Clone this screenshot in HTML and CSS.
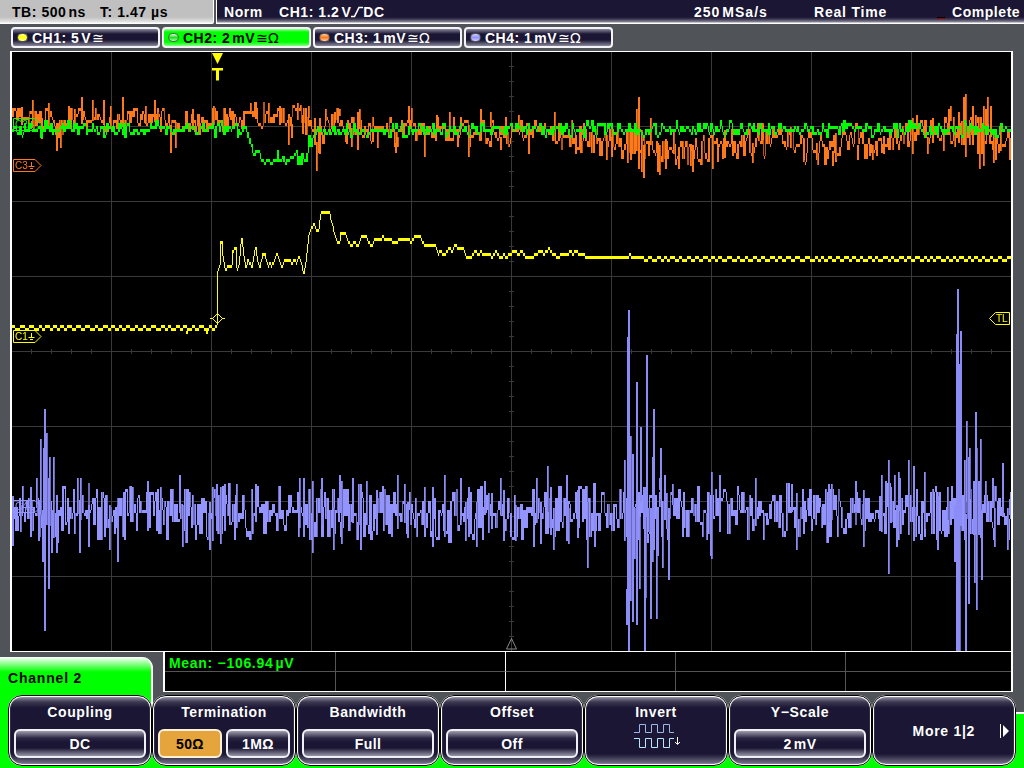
FILE: index.html
```html
<!DOCTYPE html>
<html lang="en">
<head>
  <meta charset="UTF-8">
  <meta name="viewport" content="width=device-width, initial-scale=1.0">
  <title>Oscilloscope</title>
  <link rel="stylesheet" href="styles.css">
</head>
<body>
  <div class="scope">
    <header class="status">
      <div class="timebase">
        <span class="tb">TB: 500<i></i>ns</span>
        <span class="tpos">T: 1.47 µs</span>
      </div>
      <div class="trigger">
        <span class="mode">Norm</span>
        <span class="source">CH1: 1.2<i></i>V<svg class="edge" width="12" height="12" viewBox="0 0 12 12"><path d="M0 10.500h3.500L8 1.500h4" /></svg>DC</span>
        <span class="rate">250<i></i>MSa/s</span>
        <span class="acq">Real Time</span>
        <span class="led"></span>
        <span class="state">Complete</span>
      </div>
    </header>

    <nav class="channels">
      <div class="channel"><span class="dot yellow"></span>CH1: 5<i></i>V<span class="sym">≅</span></div>
      <div class="channel active"><span class="dot green"></span>CH2: 2<i></i>mV<span class="sym">≅Ω</span></div>
      <div class="channel"><span class="dot orange"></span>CH3: 1<i></i>mV<span class="sym">≅Ω</span></div>
      <div class="channel"><span class="dot violet"></span>CH4: 1<i></i>mV<span class="sym">≅Ω</span></div>
    </nav>

    <main class="plot">
      <canvas id="traces" width="999" height="599"></canvas>
      <svg class="markers" width="999" height="599" viewBox="12 52 999 599">
        <g class="m-yellow">
          <path class="solid" d="M212 53h11l-5.500 11zM212 68h11v2.500h-4v10h-3v-10h-4z" />
          <path d="M210 318.500h3M222 318.500h3M212.500 318.500l5-5 5 5-5 5z" />
          <path d="M13.500 330.500h21.500l6 6-6 6H13.500z" />
          <path d="M31.500 333v4M28.500 337.500h6M30 339.500h3" />
          <text x="15" y="340">C1</text>
          <path d="M1009.500 312.500h-14l-6 6 6 6h14z" />
          <text x="996" y="322">TL</text>
        </g>
        <g class="m-green">
          <path d="M13.500 118.500h21.500l6 6-6 6H13.500z" />
          <path d="M31.500 121v4M28.500 125.500h6M30 127.500h3" />
          <text x="15" y="128">C2</text>
        </g>
        <g class="m-orange">
          <path d="M13.500 159.500h21.500l6 6-6 6H13.500z" />
          <path d="M31.500 162v4M28.500 166.500h6M30 168.500h3" />
          <text x="15" y="169">C3</text>
        </g>
        <g class="m-violet">
          <path d="M13.500 500.500h21.500l6 6-6 6H13.500z" />
          <path d="M31.500 503v4M28.500 507.500h6M30 509.500h3" />
          <text x="15" y="510">C4</text>
        </g>
        <path class="m-gray" d="M511.500 638.500l5 10.500h-10z" />
      </svg>
    </main>

    <section class="panel">
      <div class="info">
        <div class="tab">Channel 2</div>
        <div class="measure">
          <div class="value">Mean: −106.94<i></i>µV</div><div></div><div class="half"></div><div></div><div></div>
          <div></div><div></div><div class="half"></div><div></div><div></div>
        </div>
      </div>
      <div class="softkeys">
        <div class="key"><h2>Coupling</h2><div class="options"><button>DC</button></div></div>
        <div class="key"><h2>Termination</h2><div class="options"><button class="on">50Ω</button><button>1MΩ</button></div></div>
        <div class="key"><h2>Bandwidth</h2><div class="options"><button>Full</button></div></div>
        <div class="key"><h2>Offset</h2><div class="options"><button>Off</button></div></div>
        <div class="key">
          <h2>Invert</h2>
          <svg class="invert" width="48" height="26" viewBox="0 0 48 26">
            <path class="w1" d="M0 9.500h5.500v-8h6v8h6v-8h6v8h6v-8h6v8h4.500" />
            <path class="w2" d="M0 15.500h5.500v9h6v-9h6v9h6v-9h6v9h6v-9h4.500" />
            <path class="arrow" d="M43.500 14v7M41 19l2.500 2.500L46 19" />
          </svg>
        </div>
        <div class="key"><h2>Y−Scale</h2><div class="options"><button>2<i></i>mV</button></div></div>
        <div class="key more">
          <span>More 1|2</span>
          <svg width="9" height="14" viewBox="0 0 9 14"><path d="M0 0h1v14H0zM3 1l6 6-6 6z" /></svg>
        </div>
      </div>
    </section>
  </div>
  <script src="script.js"></script>
</body>
</html>
```
FILE: styles.css
```css
* {
  box-sizing: border-box;
}

body {
  margin: 0;
  background: #505458;
  font-family: "Liberation Sans", Arial, sans-serif;
  font-weight: bold;
  font-size: 14px;
  color: #fff;
}

.scope {
  width: 1024px;
  height: 768px;
  overflow: hidden;
  display: flex;
  flex-direction: column;
}

/* thin gap between a number and its unit */
i {
  display: inline-block;
  width: 2px;
}

.status {
  display: flex;
  gap: 2px;
  height: 24px;
  line-height: 24px;
  white-space: nowrap;
  letter-spacing: 0.55px;
}

.status span {
  flex: none;
}

.timebase {
  width: 214px;
  display: flex;
  padding-left: 12px;
  color: #000;
  background: linear-gradient(#c0c0c0 17px, #e4e4e4 22px, #fff 23px);
  border-right: 1px solid #fff;
  border-bottom-right-radius: 2px;
}

.tb {
  width: 88px;
}

.trigger {
  flex: 1;
  display: flex;
  padding-left: 7px;
  background: linear-gradient(#1a1633 17px, #38344e 19px, #8a889a 22px, #fff 23px);
  border-left: 1px solid #fff;
}

.mode {
  width: 55px;
}

.source {
  width: 415px;
}

.edge {
  vertical-align: -1px;
  fill: none;
  stroke: #fff;
  stroke-width: 1.6;
}

.rate {
  width: 120px;
  letter-spacing: 1px;
}

.acq {
  width: 123px;
  letter-spacing: 0.8px;
}

.led {
  width: 8px;
  height: 2px;
  margin: 17px 7px 0 0;
  background: #a00000;
  border-top: 1px solid #000;
}

.channels {
  display: flex;
  gap: 2px;
  height: 27px;
  padding: 3px 0 0 11px;
}

.channel {
  width: 149px;
  height: 21px;
  display: flex;
  align-items: center;
  padding-left: 4px;
  white-space: nowrap;
  letter-spacing: 0.5px;
  border: 2px solid #f4f4f8;
  border-radius: 4px;
  background: linear-gradient(#8a889c, #1a1633 5px, #1a1633 11px, #8a889c);
}

.channel.active {
  color: #000;
  background: linear-gradient(#a0ffa0, #00ff00 3px, #00ff00 13px, #80ff80);
}

.dot {
  width: 11px;
  height: 9px;
  margin-right: 4px;
  border: 1px solid #555;
  border-radius: 5px;
}

.dot.yellow {
  background: linear-gradient(#ff8, #ff0, #ffa);
}

.dot.green {
  background: linear-gradient(#dfd, #2d2, #afa);
  border-color: #464;
}

.dot.orange {
  background: linear-gradient(#fc9, #ff781a, #fca);
}

.dot.violet {
  background: linear-gradient(#ccf, #9494ff, #ccf);
}

.sym {
  margin-left: 1px;
  font-family: "DejaVu Sans", sans-serif;
  font-weight: normal;
  font-size: 14px;
  letter-spacing: 0;
}

.plot {
  flex: none;
  width: 1003px;
  height: 601px;
  margin-left: 10px;
  border: solid #fff;
  border-width: 1px 2px 1px 2px;
  background: #000;
  display: grid;
}

.plot canvas,
.markers {
  grid-area: 1 / 1;
}

.markers {
  fill: none;
}

.markers text {
  font-size: 10px;
  font-weight: normal;
  stroke: none;
}

.m-yellow {
  stroke: #ff0;
}

.m-yellow text,
.m-yellow .solid {
  fill: #ff0;
  stroke: none;
}

.m-green {
  stroke: #0f0;
}

.m-green text {
  fill: #0f0;
}

.m-orange {
  stroke: #ff781a;
}

.m-orange text {
  fill: #ff781a;
}

.m-violet {
  stroke: #9494ff;
}

.m-violet text {
  fill: #9494ff;
}

.m-gray {
  stroke: #8a8a8a;
}

.panel {
  flex: 1;
  display: flex;
  flex-direction: column;
}

.info {
  height: 43px;
  display: flex;
  gap: 10px;
}

.tab {
  width: 153px;
  height: 38px;
  align-self: flex-end;
  padding: 13px 0 0 8px;
  color: #000;
  letter-spacing: 0.8px;
  line-height: 16px;
  border-right: 2px solid #fff;
  border-top-right-radius: 11px;
  background: linear-gradient(#fff, #0f0 15px);
}

.measure {
  width: 850px;
  height: 40px;
  display: grid;
  grid-template-columns: 171px 170px 170px 170px 165px;
  grid-template-rows: 20px 19px;
  border: solid #fff;
  border-width: 0 2px 1px 2px;
  background: #000;
}

.measure div {
  border-right: 1px solid #555;
  border-bottom: 1px solid #555;
}

.measure div:nth-child(5n) {
  border-right: 0;
}

.measure div:nth-child(n + 6) {
  border-bottom: 0;
}

.measure div:nth-child(5n + 2) {
  border-right-color: #fff;
}

.measure .value {
  padding-left: 4px;
  line-height: 22px;
  letter-spacing: 0.7px;
  color: #0f0;
  white-space: nowrap;
}

.softkeys {
  flex: 1;
  display: flex;
  padding-left: 8px;
  background:
    linear-gradient(#fff, #fff) 151px 0 / 2px 14px no-repeat,
    linear-gradient(#0f0, #0f0) 0 0 / 151px 100% no-repeat,
    linear-gradient(#0f0, #0f0) 0 100% / 100% 13px no-repeat,
    linear-gradient(transparent 17px, #fff 17px, #fff 19px, #0f0 19px) 100% 0 / 10px 100% no-repeat;
}

.key {
  width: 144px;
  height: 71px;
  padding: 7px 4px 0;
  border: 2px solid #fff;
  border-radius: 14px;
  box-shadow: inset 0 0 1px #fff;
  outline: 1px solid #000;
  outline-offset: -1px;
  background: linear-gradient(#8f8da0, #3c3852 5px, #1a1633 11px, #1a1633 57px, #77758a);
  text-align: center;
}

.key h2 {
  margin: 0;
  font-size: 14px;
  line-height: 16px;
  letter-spacing: 0.6px;
}

.options {
  display: flex;
  gap: 4px;
  margin-top: 9px;
}

.options button {
  flex: 1;
  height: 29px;
  padding: 0;
  color: #fff;
  font: inherit;
  letter-spacing: 0.4px;
  border: 2px solid #f0f0f4;
  border-radius: 6px;
  background: linear-gradient(#a09eae, #2c2844 7px, #1a1633 11px, #1a1633 17px, #9896a8);
}

.options button.on {
  color: #000;
  border-color: #fff0d8;
  background: #e6a43c;
}

.invert {
  display: block;
  margin: 3px 0 0 44px;
  fill: none;
}

.w1 {
  stroke: #9cb8e8;
}

.w2 {
  stroke: #b8e8ff;
}

.arrow {
  stroke: #fff;
}

.more {
  display: flex;
  align-items: center;
  justify-content: flex-end;
  gap: 25px;
  padding: 0 5px 0 0;
  letter-spacing: 0.7px;
}

.more svg {
  fill: #fff;
}
```
FILE: script.js
```js
const canvas = document.getElementById('traces');
const ctx = canvas.getContext('2d');
ctx.translate(-12, -52); // draw in screen coordinates

let seed = 7;
function rnd() {
  seed = (seed * 16807) % 2147483647;
  return seed / 2147483647;
}

function rect(color, x, y, w, h) {
  ctx.fillStyle = color;
  ctx.fillRect(x, y, w, h);
}

function drawGrid() {
  const c = '#393939';
  for (let x = 111; x < 1011; x += 100) rect(c, x, 52, 1, 599);
  for (let y = 126; y < 651; y += 75) rect(c, 12, y, 999, 1);
  for (let x = 31; x < 1011; x += 20) rect(c, x, 349, 1, 5);
  for (let y = 66; y < 651; y += 15) rect(c, 509, y, 5, 1);
}

// value at x on a list of [x, y] points
function lerp(points, x) {
  for (let i = 1; i < points.length; i++) {
    const [x0, y0] = points[i - 1];
    const [x1, y1] = points[i];
    if (x <= x1) return y0 + (y1 - y0) * (x - x0) / (x1 - x0);
  }
  return points[points.length - 1][1];
}

// noise around mid(x) with amplitude amp(x), y snapped to the 3px sample grid;
// swing is the chance that a sample lands on the other side of the middle
function drawNoise(color, dark, mid, amp, swing) {
  let prev = Math.round(mid(12));
  let side = 1;
  let x = 12;
  while (x < 1011) {
    const step = rnd() < 0.4 ? 2 : 1;
    if (rnd() < swing) side = -side;
    const r = side * Math.pow(rnd(), 1.4);
    const y = Math.round((mid(x) + r * amp(x)) / 3) * 3;
    const top = Math.min(prev, y);
    const h = Math.max(3, Math.abs(prev - y));
    rect(color, x, top, step, h);
    if (rnd() < 0.3 && h > 9) rect(dark, x + step - 1, top, 1, h);
    prev = y;
    x += step;
  }
}

// [x, top, bottom] bars
function drawSpikes(color, dark, list) {
  list.forEach(([x, top, bottom], i) => {
    rect(color, x, top, 2, bottom - top);
    if (i % 2) rect(dark, x + 1, top, 1, bottom - top);
  });
}

const violetSpikes = [
  [12, 496, 546], [20, 505, 532], [30, 487, 516], [36, 478, 508], [38, 500, 541], [40, 439, 515],
  [42, 510, 562], [43, 448, 520], [44, 409, 631], [46, 433, 525], [48, 478, 589], [49, 457, 526],
  [51, 510, 553], [53, 457, 538], [56, 495, 553], [77, 478, 514], [79, 500, 553], [80, 478, 520],
  [88, 505, 547], [109, 505, 550], [117, 505, 562], [132, 487, 514], [147, 481, 531], [160, 487, 534],
  [179, 475, 513], [182, 505, 547], [209, 502, 550], [212, 487, 541], [216, 484, 531], [220, 487, 544],
  [224, 484, 531], [236, 484, 528], [255, 484, 522], [299, 478, 528], [303, 478, 537], [312, 481, 553],
  [321, 478, 525], [333, 508, 550], [339, 475, 513], [341, 481, 544], [352, 478, 523], [358, 484, 525],
  [360, 484, 550], [366, 481, 517], [376, 490, 535], [397, 475, 529], [391, 510, 537], [404, 484, 523],
  [407, 502, 538], [424, 487, 528], [432, 487, 547], [444, 475, 537], [460, 478, 520], [465, 502, 541],
  [468, 487, 537], [476, 502, 547], [484, 481, 515], [488, 493, 533], [491, 493, 529], [500, 478, 515],
  [503, 490, 541], [515, 505, 541], [533, 502, 547], [536, 478, 523], [540, 502, 544], [547, 466, 512],
  [550, 487, 535], [553, 508, 550], [566, 475, 541], [568, 508, 544], [577, 490, 538], [587, 502, 568],
  [594, 502, 547],
  [624, 460, 541], [626, 589, 625], [627, 337, 589], [628, 310, 651], [630, 436, 601], [632, 454, 622],
  [634, 508, 559], [636, 382, 625], [639, 517, 589], [640, 427, 502], [643, 487, 529], [644, 487, 651],
  [645, 510, 598], [646, 355, 517], [648, 508, 532], [650, 508, 619], [652, 457, 562], [653, 409, 550],
  [656, 511, 619], [657, 508, 556], [659, 478, 490], [660, 448, 499], [662, 535, 568], [664, 475, 520],
  [666, 493, 529], [668, 508, 580], [672, 484, 505], [710, 511, 556], [711, 472, 559], [719, 475, 532],
  [755, 478, 526], [791, 484, 512], [796, 493, 550], [828, 484, 522], [831, 484, 520], [855, 481, 512],
  [863, 490, 547], [879, 496, 531], [881, 475, 532], [885, 481, 522], [888, 460, 574], [890, 487, 523],
  [894, 475, 508], [896, 505, 547], [898, 472, 532], [899, 478, 511], [908, 460, 535], [913, 466, 541],
  [924, 472, 529], [937, 496, 550], [947, 487, 520], [954, 505, 562], [956, 334, 651], [957, 289, 651],
  [959, 364, 651], [960, 331, 526], [964, 460, 540], [965, 514, 651], [966, 421, 502], [968, 457, 604],
  [969, 448, 499], [973, 481, 535], [974, 481, 583], [975, 412, 535], [976, 448, 610], [978, 481, 535],
  [980, 439, 538], [981, 510, 580], [985, 481, 513], [992, 478, 508], [994, 508, 547], [1002, 463, 517],
  [1007, 508, 550], [1009, 499, 515]
];

const orangeSpikes = [
  [21, 107, 125], [32, 100, 128], [41, 118, 139], [48, 103, 128], [56, 128, 151], [60, 125, 148],
  [68, 106, 128], [74, 109, 125], [81, 97, 124], [92, 100, 121], [103, 100, 125], [110, 106, 127],
  [122, 97, 127], [145, 106, 124], [154, 100, 122], [157, 112, 125], [170, 125, 153], [175, 122, 148],
  [192, 109, 130], [213, 106, 125], [224, 109, 127], [250, 103, 112], [255, 103, 119], [268, 103, 115],
  [279, 106, 125], [288, 118, 145], [291, 124, 138], [297, 103, 112], [302, 115, 134], [308, 106, 118],
  [314, 118, 145], [316, 142, 171], [319, 118, 154], [325, 109, 121], [334, 112, 122], [339, 109, 116],
  [345, 130, 142], [351, 128, 147], [357, 112, 150], [359, 109, 127], [372, 130, 142], [377, 130, 148],
  [395, 143, 153], [397, 137, 147], [408, 106, 121], [424, 131, 157], [436, 115, 130], [449, 112, 127],
  [457, 131, 147], [468, 125, 157], [480, 109, 127], [490, 112, 127], [500, 137, 150], [518, 115, 130],
  [528, 131, 154], [554, 112, 130], [575, 137, 154], [606, 135, 160], [611, 137, 157], [627, 131, 163],
  [630, 128, 160], [632, 130, 154], [634, 130, 154], [636, 109, 151], [638, 97, 169], [641, 130, 172],
  [643, 145, 178], [650, 118, 145], [657, 143, 172], [659, 145, 175], [665, 139, 169], [673, 131, 154],
  [678, 151, 169], [690, 151, 166], [692, 145, 172], [712, 136, 169], [724, 130, 158], [752, 143, 163],
  [762, 124, 140], [790, 127, 148], [803, 139, 160], [816, 143, 160], [832, 151, 166], [835, 133, 160],
  [857, 145, 160], [872, 145, 160], [883, 136, 154], [912, 118, 154], [916, 115, 135], [927, 137, 154],
  [932, 118, 143], [943, 130, 151], [948, 109, 130], [950, 106, 121], [958, 112, 143], [961, 121, 145],
  [963, 97, 145], [965, 94, 157], [967, 128, 136], [969, 128, 145], [972, 106, 145], [975, 115, 130],
  [977, 128, 154], [979, 128, 169], [981, 130, 154], [983, 106, 166], [985, 109, 130], [987, 97, 124],
  [990, 106, 137], [993, 130, 163], [995, 137, 160], [1000, 124, 151], [1009, 145, 160]
];

const orangeMid = [
  [12, 117], [50, 118], [57, 128], [62, 121], [165, 120], [171, 133], [180, 124], [240, 119],
  [250, 112], [285, 116], [310, 121], [317, 145], [323, 128], [335, 120], [347, 131], [354, 129],
  [392, 128], [396, 143], [402, 124], [408, 118], [415, 129], [570, 135], [600, 141], [650, 150],
  [700, 152], [720, 145], [760, 139], [800, 146], [833, 151], [845, 135], [875, 150], [900, 136],
  [945, 133], [975, 131], [1000, 142], [1011, 140]
];
const orangeAmp = [[12, 14], [240, 14], [300, 14], [340, 14], [620, 16], [650, 18], [900, 17], [940, 16], [1011, 17]];
const greenMid = [
  [12, 129], [246, 129], [249, 142], [253, 155], [260, 158], [270, 158], [280, 159],
  [290, 157], [303, 159], [308, 143], [313, 135], [320, 130], [640, 129], [1011, 129]
];

// CH1 step response
const yellow = [
  [217, 326], [217, 280], [218, 271], [220, 266], [220, 241], [222, 241], [223, 257], [225, 269],
  [228, 266], [232, 265], [233, 250], [236, 247], [237, 268], [239, 266], [241, 245], [242, 238],
  [244, 255], [246, 267], [248, 260], [251, 265], [252, 269], [255, 250], [256, 247], [258, 263],
  [260, 267], [263, 253], [265, 254], [268, 266], [270, 262], [272, 266], [277, 253], [280, 263],
  [283, 266], [285, 260], [290, 260], [292, 263], [294, 259], [297, 263], [299, 257], [302, 266],
  [304, 275], [307, 254], [309, 236], [312, 227], [314, 223], [317, 230], [319, 228], [321, 214],
  [322, 211], [329, 211], [332, 223], [335, 235], [337, 241], [340, 241], [341, 232], [345, 232],
  [348, 241], [352, 244], [354, 241], [358, 245], [362, 235], [366, 235], [368, 241], [372, 245],
  [375, 238], [382, 238], [383, 235], [384, 238], [391, 238], [392, 241], [398, 241], [399, 238],
  [409, 238], [411, 241], [413, 238], [416, 235], [420, 235], [424, 244], [435, 244], [438, 254],
  [440, 250], [443, 253], [447, 251], [450, 247], [452, 251], [455, 244], [458, 247], [463, 248],
  [466, 256], [471, 256], [475, 250], [479, 254], [481, 250], [483, 253], [490, 253], [492, 256],
  [496, 250], [500, 256], [504, 254], [507, 256], [509, 253], [515, 250], [519, 253], [521, 250],
  [526, 256], [533, 256], [535, 253], [541, 250], [544, 253], [549, 248], [553, 253], [558, 256],
  [562, 253], [568, 253], [570, 250], [573, 253], [576, 250], [579, 253], [584, 253], [585, 256],
  [611, 256], [612, 259], [613, 256], [629, 256], [630, 253], [631, 256], [640, 256]
];

// flat part that toggles between two sample levels
function drawToggle(from, to, y) {
  let x = from;
  let high = true;
  while (x < to) {
    const w = Math.min(to - x, 3 + Math.floor(rnd() * 3));
    rect('#ff0', x, high ? y : y + 3, w, 3);
    high = !high;
    x += w;
  }
}

function snap(y) {
  return Math.round((y - 1) / 3) * 3 + 1;
}

function drawYellow() {
  drawToggle(12, 217, 325);
  rect('#ff0', 186, 331, 2, 3);
  rect('#ff0', 206, 331, 2, 3);
  for (let i = 1; i < yellow.length; i++) {
    const [x0, y0] = yellow[i - 1];
    const [x1, y1] = yellow[i];
    const n = Math.max(1, x1 - x0);
    for (let k = 0; k < n; k++) {
      const a = snap(y0 + (y1 - y0) * k / n);
      const b = snap(y0 + (y1 - y0) * (k + 1) / n);
      rect('#ff0', x0 + k, Math.min(a, b), 1, Math.max(3, Math.abs(b - a)));
    }
  }
  drawToggle(640, 1011, 256);
}

drawGrid();
drawNoise('#9494ff', '#6a6ab8', () => 513, () => 29, 0.75);
drawSpikes('#8c8cf6', '#6a6ab8', violetSpikes);
drawNoise('#ff781a', '#b85410', x => lerp(orangeMid, x), x => lerp(orangeAmp, x), 0.5);
drawSpikes('#ff781a', '#c85c14', orangeSpikes);
drawNoise('#0f0', '#0f0', x => lerp(greenMid, x), () => 8, 0.5);
drawYellow();
```
